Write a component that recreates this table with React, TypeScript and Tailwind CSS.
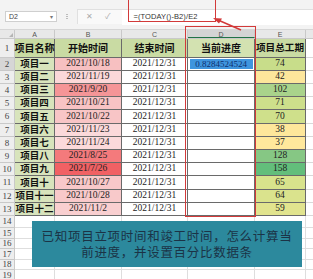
import React from "react";

const rows: [string, string, string, string, string, number][] = [
  ["项目一", "2021/10/18", "#f7c0c1", "74", "#c8dd8a", 13],
  ["项目二", "2021/11/19", "#fbd8d9", "42", "#fde69b", 13],
  ["项目三", "2021/9/20", "#f59597", "102", "#a9d38b", 13],
  ["项目四", "2021/10/21", "#f8c3c4", "71", "#cddf8b", 13],
  ["项目五", "2021/10/22", "#f8c5c6", "70", "#cfe08b", 14],
  ["项目六", "2021/11/23", "#fbd9da", "38", "#fee79b", 13],
  ["项目七", "2021/11/24", "#fbdadb", "37", "#ffe89c", 13],
  ["项目八", "2021/8/25", "#f47a7c", "128", "#86c784", 13],
  ["项目九", "2021/7/26", "#f16164", "158", "#63be7b", 13],
  ["项目十", "2021/10/27", "#f8c8c9", "65", "#d8e38c", 14],
  ["项目十一", "2021/10/28", "#f8c9ca", "64", "#dae38d", 13],
  ["项目十二", "2021/11/2", "#f9cfd0", "59", "#e1e48e", 13],
];

const extra: [string, number][] = [
  ["14", 12],
  ["15", 11],
  ["16", 10],
  ["17", 11],
  ["18", 10],
  ["19", 12],
];

const cjk = { fontFamily: '"Noto Sans CJK SC", "Noto Sans", sans-serif' };
const serif = { fontFamily: '"Liberation Serif", "Noto Sans CJK SC", serif' };
const sans = { fontFamily: '"Liberation Sans", "Noto Sans CJK SC", sans-serif' };

export default function App() {
  return (
    <div className="relative w-[313px] h-[279px] overflow-hidden bg-white">
      {/* formula toolbar */}
      <div className="h-[30px] bg-[#f3f3f3] flex items-start border-b border-[#d6d6d6]" style={sans}>
        <div className="ml-[5px] mt-[11px] w-[52px] h-[11px] bg-white border border-[#cfcfcf] flex items-center justify-between px-[3px] text-[7px] leading-none text-[#444]">
          <span>D2</span>
          <span className="text-[6px] text-[#777]">▾</span>
        </div>
        <div className="ml-[9px] mt-[11px] h-[11px] w-[2px] flex flex-col justify-center gap-[1px]">
          <div className="w-[2px] h-[1px] bg-[#bbb]" />
          <div className="w-[2px] h-[1px] bg-[#bbb]" />
          <div className="w-[2px] h-[1px] bg-[#bbb]" />
        </div>
        <div className="ml-[9px] mt-[9px] h-[15px] flex-1 bg-[#f9f9f9] border-l border-t border-[#e0e0e0] flex items-center leading-none">
          <span className="ml-[8px] text-[8px] text-[#aaa]">✕</span>
          <span className="ml-[12px] text-[8px] text-[#aaa]">✓</span>
          <div className="ml-[12px] h-[15px] flex-1 bg-white flex items-center">
            <span className="ml-[11px] text-[7.5px] text-[#333] tracking-[0.1px]">=(TODAY()-B2)/E2</span>
          </div>
        </div>
      </div>

      {/* column headers */}
      <div className="flex h-[9px] bg-[#e8e8e8] border-b border-[#c9c9c9] text-[7px] text-[#555] leading-[9px]" style={sans}>
        <div className="w-[15px] border-r border-[#c9c9c9] flex items-end justify-end pr-[1px]">
          <span className="w-0 h-0 border-l-[4px] border-l-transparent border-b-[4px] border-b-[#b5b5b5] mb-[1px]" />
        </div>
        <div className="w-[40px] text-center border-r border-[#c9c9c9]">A</div>
        <div className="w-[67px] text-center border-r border-[#c9c9c9]">B</div>
        <div className="w-[66px] text-center border-r border-[#c9c9c9]">C</div>
        <div className="w-[67px] text-center border-r border-[#c9c9c9] bg-[#d4d4d4] border-b border-b-[#217346]">D</div>
        <div className="w-[51px] text-center border-r border-[#c9c9c9]">E</div>
        <div className="flex-1" />
      </div>

      {/* header row 1 */}
      <div className="flex h-[19px]">
        <div className="w-[15px] bg-[#eeeeee] border-r border-b border-[#c9c9c9] flex items-center justify-center text-[9px] leading-none text-[#444]" style={serif}>1</div>
        {["项目名称", "开始时间", "结束时间", "当前进度", "项目总工期"].map((t, i) => (
          <div
            key={t}
            className={`${["w-[40px]", "w-[67px]", "w-[66px]", "w-[67px]", "w-[51px]"][i]} ${i === 3 ? "bg-[#d3e2b1]" : "bg-[#c9dba3]"} border-r border-b border-[#6a6a6a] flex items-center justify-center font-bold ${i === 4 ? "text-[9.6px]" : "text-[10px]"} leading-none text-[#111] whitespace-nowrap`}
            style={cjk}
          >
            {t}
          </div>
        ))}
        <div className="flex-1 border-b border-[#d9d9d9]" />
      </div>

      {/* data rows */}
      {rows.map(([name, date, bc, dur, ec, h], idx) => (
        <div key={name} className="flex" style={{ height: h }}>
          <div
            className={`w-[15px] ${idx === 0 ? "bg-[#d6d6d6]" : "bg-[#eeeeee]"} border-r border-b border-[#c9c9c9] flex items-center justify-center text-[9px] leading-none text-[#444]`}
            style={serif}
          >
            {idx + 2}
          </div>
          <div className="w-[40px] bg-[#d8e4bc] border-r border-b border-[#6a6a6a] flex items-center justify-center font-bold text-[9.5px] leading-none text-[#111] whitespace-nowrap overflow-visible" style={cjk}>
            {name}
          </div>
          <div className="w-[67px] border-r border-b border-[#6a6a6a] flex items-center justify-center text-[9.5px] leading-none text-[#222]" style={{ ...serif, backgroundColor: bc }}>
            {date}
          </div>
          <div className="w-[66px] bg-white border-r border-b border-[#6a6a6a] flex items-center justify-center text-[9.5px] leading-none text-[#222]" style={serif}>
            2021/12/31
          </div>
          <div className="w-[67px] bg-white border-r border-b border-[#6a6a6a] flex items-center justify-center">
            {idx === 0 && (
              <div className="w-[63px] h-[10px] bg-[#3f95de] flex items-center justify-center text-[9px] leading-none text-[#0d2f6e]" style={serif}>
                0.8284524524
              </div>
            )}
          </div>
          <div className="w-[51px] border-r border-b border-[#6a6a6a] flex items-center justify-center text-[9.5px] leading-none text-[#222]" style={{ ...serif, backgroundColor: ec }}>
            {dur}
          </div>
          <div className="flex-1 border-b border-[#d9d9d9]" />
        </div>
      ))}

      {/* empty rows */}
      {extra.map(([n, h]) => (
        <div key={n} className="flex" style={{ height: h }}>
          <div className="w-[15px] bg-[#eeeeee] border-r border-b border-[#c9c9c9] flex items-center justify-center text-[9px] text-[#444] leading-none" style={serif}>
            {n}
          </div>
          <div className="w-[40px] border-r border-b border-[#dedede]" />
          <div className="w-[67px] border-r border-b border-[#dedede]" />
          <div className="w-[66px] border-r border-b border-[#dedede]" />
          <div className="w-[67px] border-r border-b border-[#dedede]" />
          <div className="w-[51px] border-r border-b border-[#dedede]" />
          <div className="flex-1 border-b border-[#dedede]" />
        </div>
      ))}

      {/* red annotation: formula box */}
      <div className="absolute left-[128px] top-[-1px] w-[88px] h-[23px] border-[1.5px] border-[#d23a3a]" />
      {/* red annotation: column D */}
      <div className="absolute left-[185px] top-[26px] w-[71px] h-[191px] border-[1.5px] border-[#d23a3a]" />
      {/* arrow */}
      <svg className="absolute left-0 top-0 pointer-events-none" width="313" height="279">
        <line x1="241" y1="30" x2="218" y2="20" stroke="#d23a3a" strokeWidth="1.5" />
        <polygon points="213,18 222,18.5 219,23.5" fill="#d23a3a" />
      </svg>

      {/* caption overlay */}
      <div className="absolute left-[32px] top-[221px] w-[270px] h-[46px] bg-[#2c899d] flex flex-col items-center justify-center gap-[4px] text-[12.5px] leading-[12.5px] text-[#1b3346]" style={cjk}>
        <div className="whitespace-nowrap tracking-[0.7px]">已知项目立项时间和竣工时间，怎么计算当</div>
        <div className="whitespace-nowrap tracking-[0.7px]">前进度，并设置百分比数据条</div>
      </div>
    </div>
  );
}
